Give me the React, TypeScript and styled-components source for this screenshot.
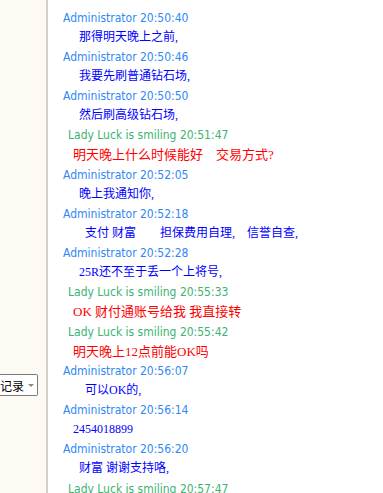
import React from "react";
import styled, { createGlobalStyle } from "styled-components";

const Global = createGlobalStyle`
  html, body { margin: 0; padding: 0; background: #ffffff; }
  #root { width: 383px; height: 493px; overflow: hidden; }
`;

const Page = styled.div`
  display: flex;
  width: 383px;
  height: 493px;
  overflow: hidden;
  background: #ffffff;
`;

const Side = styled.div`
  width: 48px;
  flex: none;
  background: #fdfaf4;
  border-right: 2px solid #d4d0c8;
  padding-top: 374px;
  box-sizing: border-box;
  overflow: hidden;
`;

const Select = styled.div`
  display: flex;
  align-items: center;
  width: 38px;
  height: 22px;
  box-sizing: border-box;
  border: 1px solid #7a7a7a;
  border-left: none;
  border-radius: 0 2px 2px 0;
  background: #ffffff;
  font-family: "Noto Sans CJK SC", sans-serif;
  font-size: 12px;
  color: #000;
  padding-left: 0;
  white-space: nowrap;
`;

const Label = styled.span`
  flex: 1;
`;

const Arrow = styled.span`
  width: 0;
  height: 0;
  margin-right: 3px;
  border-left: 3px solid transparent;
  border-right: 3px solid transparent;
  border-top: 3px solid #8a8a8a;
`;

const Log = styled.div`
  flex: 1;
  padding-top: 6.5px;
  display: flex;
  flex-direction: column;
`;

const Header = styled.div<{ $who: "admin" | "lady" }>`
  height: 22px;
  line-height: 22px;
  font-family: "DejaVu Sans Condensed", "DejaVu Sans", sans-serif;
  font-size: 12px;
  white-space: pre;
  padding-left: ${(p) => (p.$who === "admin" ? 15 : 20)}px;
  color: ${(p) => (p.$who === "admin" ? "#3088f6" : "#3cb371")};
`;

const Message = styled.div<{ $indent: number; $red?: boolean }>`
  height: 17.25px;
  line-height: 17.25px;
  font-family: "Liberation Serif", "Noto Sans CJK SC", serif;
  font-size: ${(p) => (p.$red ? 13 : 12)}px;
  white-space: pre;
  padding-left: ${(p) => p.$indent}px;
  color: ${(p) => (p.$red ? "#ff0000" : "#0000ff")};
`;

type Entry = {
  who: "admin" | "lady";
  time: string;
  text?: string;
  indent?: number;
};

const entries: Entry[] = [
  { who: "admin", time: "20:50:40", text: "那得明天晚上之前,", indent: 31 },
  { who: "admin", time: "20:50:46", text: "我要先刷普通钻石场,", indent: 31 },
  { who: "admin", time: "20:50:50", text: "然后刷高级钻石场,", indent: 31 },
  { who: "lady", time: "20:51:47", text: "明天晚上什么时候能好    交易方式?", indent: 25 },
  { who: "admin", time: "20:52:05", text: "晚上我通知你,", indent: 31 },
  { who: "admin", time: "20:52:18", text: "支付 财富        担保费用自理,    信誉自查,", indent: 37 },
  { who: "admin", time: "20:52:28", text: "25R还不至于丢一个上将号,", indent: 31 },
  { who: "lady", time: "20:55:33", text: "OK 财付通账号给我 我直接转", indent: 25 },
  { who: "lady", time: "20:55:42", text: "明天晚上12点前能OK吗", indent: 25 },
  { who: "admin", time: "20:56:07", text: "可以OK的,", indent: 37 },
  { who: "admin", time: "20:56:14", text: "2454018899", indent: 25 },
  { who: "admin", time: "20:56:20", text: "财富 谢谢支持咯,", indent: 31 },
  { who: "lady", time: "20:57:47" },
];

export default function App() {
  return (
    <>
      <Global />
      <Page>
        <Side>
          <Select>
            <Label>记录</Label>
            <Arrow />
          </Select>
        </Side>
        <Log>
          {entries.map((e, i) => (
            <React.Fragment key={i}>
              <Header $who={e.who}>
                {(e.who === "admin" ? "Administrator" : "Lady Luck is smiling") + " " + e.time}
              </Header>
              {e.text !== undefined && (
                <Message $indent={e.indent ?? 31} $red={e.who === "lady"}>
                  {e.text}
                </Message>
              )}
            </React.Fragment>
          ))}
        </Log>
      </Page>
    </>
  );
}
